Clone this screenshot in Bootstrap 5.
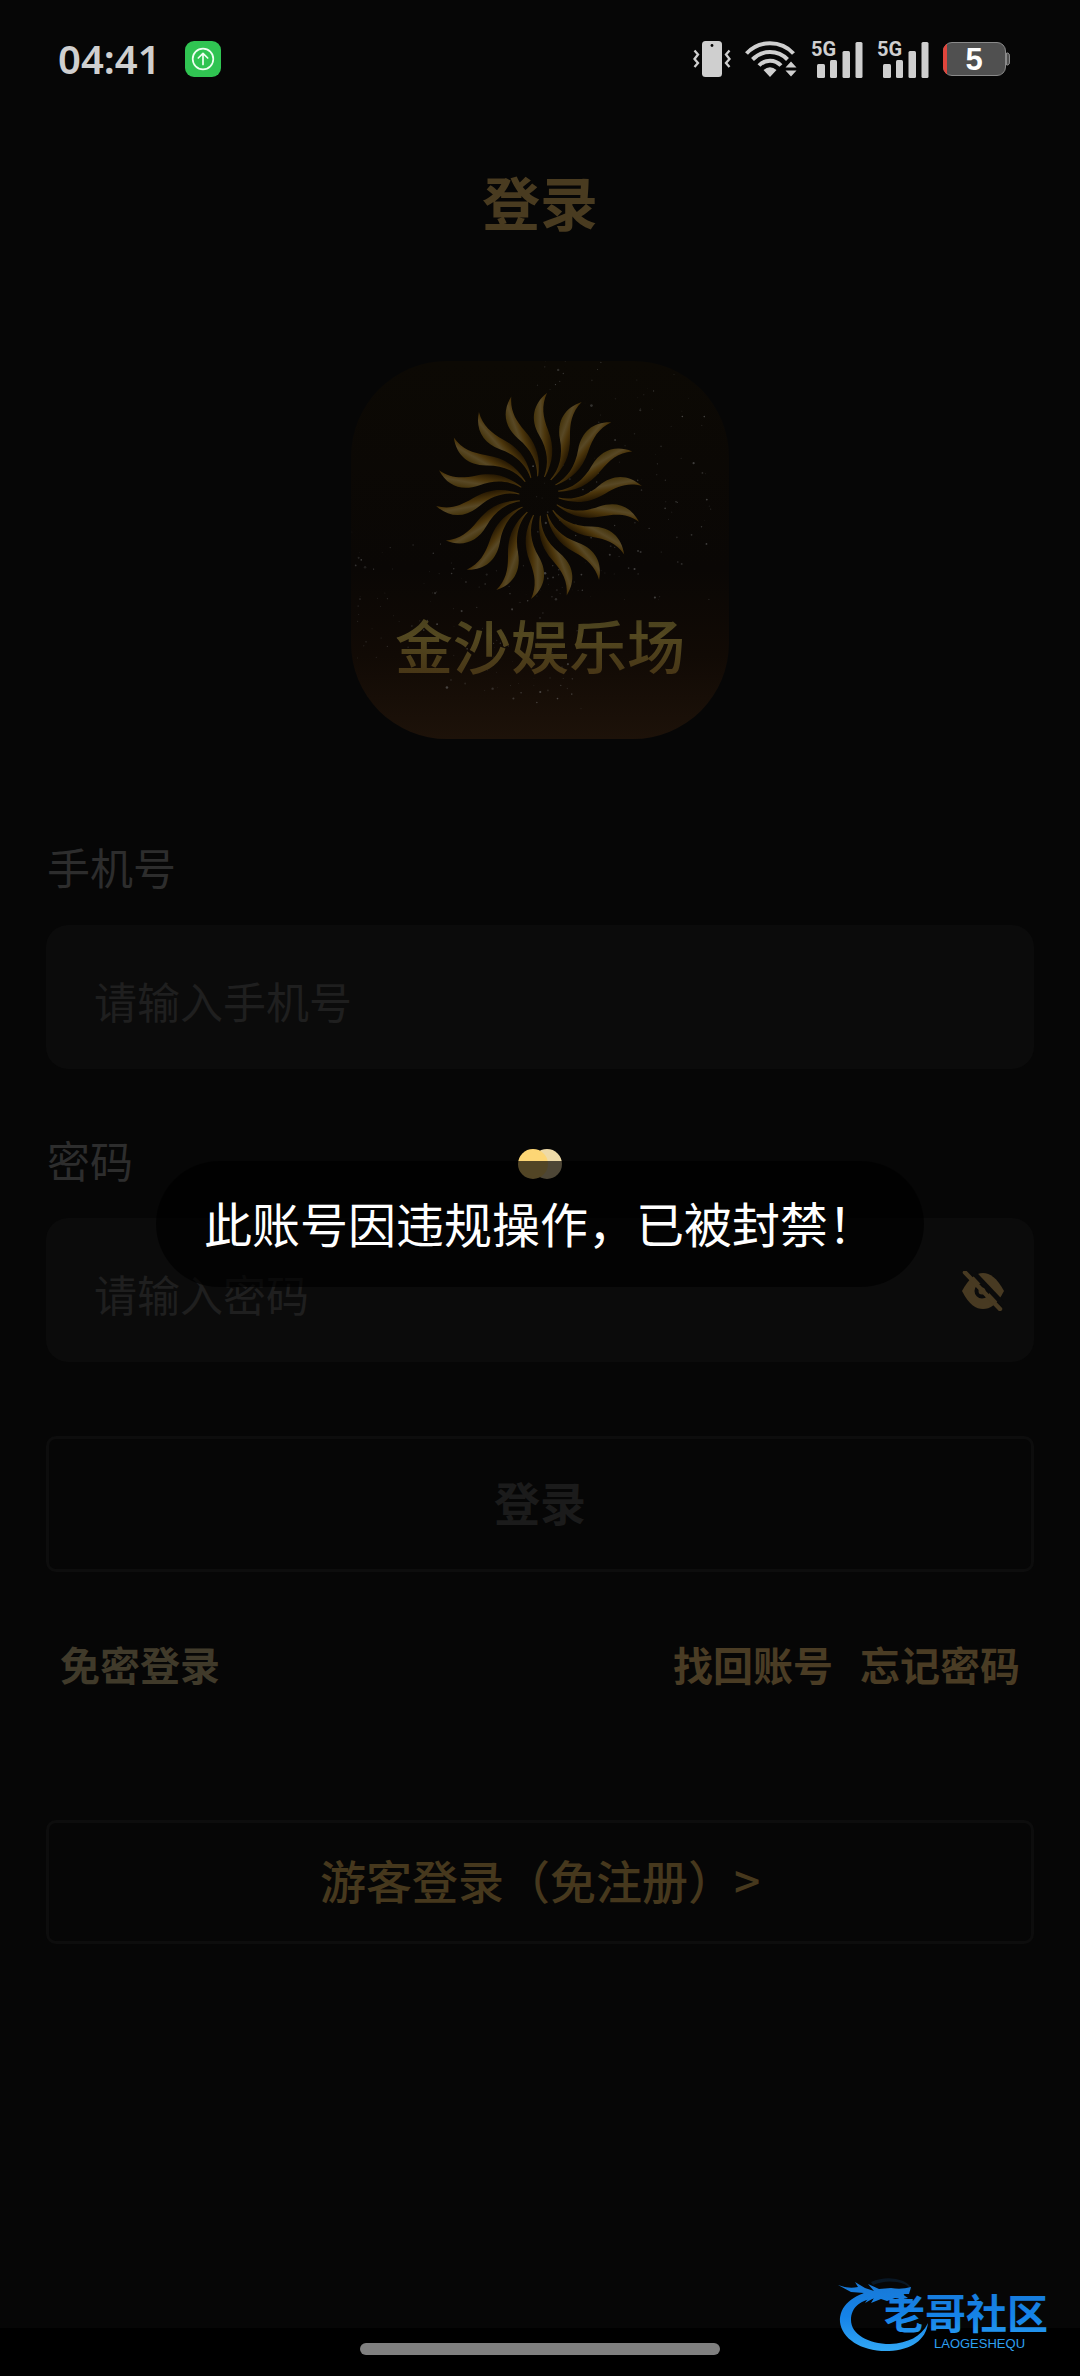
<!DOCTYPE html>
<html lang="zh-CN" data-bs-theme="dark">
<head>
<meta charset="utf-8">
<meta name="viewport" content="width=device-width, initial-scale=1">
<title>登录</title>
<link href="https://cdn.jsdelivr.net/npm/bootstrap@5.3.0/dist/css/bootstrap.min.css" rel="stylesheet">
<style>
  body { background: #000; font-family: "Noto Sans CJK SC", sans-serif; }
  svg { display: block; flex: none; }
  .screen { background: #060606; }
  .status-bar { height: 120px; padding: 0 70px 2px 58px; color: #cfcfcf; }
  .clock { font: 600 40px/48px "Noto Sans", sans-serif; margin-right: 24px; }
  .status-icons { gap: 14px; }
  .page-head { height: 168px; padding-bottom: 6px; }
  .page-title { font-size: 58px; line-height: 72px; color: #493b20; }
  .brand { margin-top: 73px; margin-bottom: 99px; }
  .login-form { padding: 0 46px; }
  .field-label { font-size: 43px; line-height: 56px; color: #2d2d2d; margin-bottom: 31px; padding-left: 1px; }
  .field-box, .field-box:focus { height: 144px; border: 0; border-radius: 22px; background: #0b0b0b; font-size: 43px; line-height: 60px; padding: 5px 100px 0 48px; color: #ccc; }
  .field-box::placeholder { color: #1f1f1f; opacity: 1; }
  .field-gap { margin-bottom: 62px; }
  .eye-btn { top: 0; right: 24px; height: 144px; padding: 2px 6px 0; border: 0; background: none; }
  .line-btn, .line-btn:disabled { border: 3px solid #0d0d0d; border-radius: 10px; font-size: 46px; line-height: 60px; padding: 0 0 6px; opacity: 1; }
  .submit-btn, .submit-btn:disabled { height: 136px; margin-top: 74px; color: #1b1b1b; font-weight: 700; }
  .guest-btn { height: 124px; margin-top: 126px; color: #46381d; font-weight: 500; }
  .links { margin-top: 62px; padding: 0 14px; font-size: 40px; line-height: 60px; font-weight: 700; }
  .links a { color: #4a3c24; text-decoration: none; }
  .links .pale-link { color: #403a2a; }
  .links-right { gap: 27px; }
  .notice { top: calc(50% + 60px); border-radius: 63px; padding: 30px 48px 34px; background: rgba(0,0,0,.68); color: #fff; font-size: 48px; line-height: 62px; white-space: nowrap; }
  .nav-strip { height: 48px; background: #000; padding-top: 15px; }
  .nav-pill { width: 33.3333%; height: 12px; border-radius: 6px; background: #808080; }
  .watermark { right: 12px; bottom: 20px; }
</style>
<script src="https://cdn.jsdelivr.net/npm/bootstrap@5.3.0/dist/js/bootstrap.bundle.min.js"></script>
</head>
<body>
<div class="d-flex flex-column min-vh-100 position-relative">
  <main class="screen flex-grow-1 position-relative">
    <div class="status-bar d-flex align-items-center">
      <span class="clock">04:41</span>
      <svg width="36" height="36" viewBox="0 0 36 36"><rect width="36" height="36" rx="9" fill="#30c452"/><g fill="none" stroke="#effff2" stroke-width="1.7" stroke-linecap="round" stroke-linejoin="round"><circle cx="18" cy="18" r="10.3"/><path d="M18 23.500V12.500M13.300 17 18 12.300 22.700 17"/></g></svg>
      <div class="status-icons d-flex align-items-center ms-auto">
        <svg width="38" height="36" viewBox="0 0 38 36" fill="#cfcfcf"><rect x="9" width="20" height="36" rx="3.500"/><circle cx="19" cy="4.500" r="1.400" fill="#060606"/><path d="M1.500 9.500 5 13.500 1.500 18 5 22 1.500 26M36.500 9.500 33 13.500 36.500 18 33 22 36.500 26" fill="none" stroke="#cfcfcf" stroke-width="2.300"/></svg>
        <svg width="52" height="36" viewBox="0 0 52 36"><g fill="none" stroke="#cfcfcf" stroke-width="4"><path d="M1.500 12.500C14-1.200 36-1.200 48.500 12.500"/><path d="M7.500 18.500C17 8.500 33 8.500 42.500 18.500"/><path d="M14 24.500C20 18 30 18 36 24.500"/></g><g fill="#cfcfcf"><path d="M18.500 29Q25 23.500 31.500 29L25 36ZM40.500 26.500 46 20.500 51.500 26.500ZM40.500 29.500H51.500L46 35.500Z"/></g></svg>
        <svg width="52" height="46" viewBox="0 -4 52 46" fill="#cfcfcf"><text x="0" y="16" font-family="Roboto, sans-serif" font-weight="700" font-size="20">5G</text><rect x="6" y="24" width="8" height="14" rx="1.500"/><rect x="19" y="20" width="7" height="18" rx="1.500"/><rect x="31.500" y="11" width="7.500" height="27" rx="1.500"/><rect x="44.500" y="2" width="7" height="36" rx="1.500"/></svg>
        <svg width="52" height="46" viewBox="0 -4 52 46" fill="#cfcfcf"><text x="0" y="16" font-family="Roboto, sans-serif" font-weight="700" font-size="20">5G</text><rect x="6" y="24" width="8" height="14" rx="1.500"/><rect x="19" y="20" width="7" height="18" rx="1.500"/><rect x="31.500" y="11" width="7.500" height="27" rx="1.500"/><rect x="44.500" y="2" width="7" height="36" rx="1.500"/></svg>
        <svg width="67" height="34" viewBox="0 0 67 34"><clipPath id="cell"><rect width="63" height="34" rx="9"/></clipPath><rect x=".5" y=".5" width="62" height="33" rx="8.500" fill="#505050" stroke="#8a8a8a"/><path d="M63.500 11h1.500q1.500.5 1.500 3v6q0 2.500-1.500 3h-1.500z" fill="#505050" stroke="#8a8a8a"/><rect width="4" height="34" fill="#e0453c" clip-path="url(#cell)"/><text x="31" y="28" text-anchor="middle" fill="#fff" font-family="Liberation Sans, sans-serif" font-weight="700" font-size="31">5</text></svg>
      </div>
    </div>

    <header class="page-head d-flex align-items-center justify-content-center">
      <h1 class="page-title fw-bold m-0">登录</h1>
    </header>

    <div class="brand d-flex justify-content-center">
      <svg width="378" height="378" viewBox="0 0 378 378" role="img" aria-label="金沙娱乐场">
        <defs>
          <linearGradient id="sky" x1="0" y1="0" x2="0" y2="1"><stop offset="0" stop-color="#0c0904"/><stop offset=".55" stop-color="#0a0705"/><stop offset=".78" stop-color="#110a05"/><stop offset="1" stop-color="#1d1209"/></linearGradient>
          <linearGradient id="ray" x1="0" y1="0" x2="1" y2="0"><stop offset="0" stop-color="#45340c"/><stop offset=".35" stop-color="#584825"/><stop offset=".6" stop-color="#4b350b"/><stop offset="1" stop-color="#261802"/></linearGradient>
          <linearGradient id="gold" x1="0" y1="0" x2="0" y2="1"><stop offset="0" stop-color="#40391b"/><stop offset=".4" stop-color="#534820"/><stop offset="1" stop-color="#443013"/></linearGradient>
          <clipPath id="tile"><rect width="378" height="378" rx="96"/></clipPath>
          <path id="flame" d="M5-19C10-32 9-46 0-61C-9-77-6-92 8-103C2-90 4-79 9-66C16-48 14-34 6-19Z"/>
        </defs>
        <g clip-path="url(#tile)">
          <rect width="378" height="378" fill="url(#sky)"/>
          <g id="stars" fill="#777"></g>
          <g id="sun" transform="translate(188 135)" fill="url(#ray)"></g>
          <text x="189" y="308" text-anchor="middle" font-size="58" font-weight="500" fill="url(#gold)">金沙娱乐场</text>
        </g>
      </svg>
    </div>

    <form class="login-form" onsubmit="return false">
      <label class="field-label d-block" for="phone">手机号</label>
      <input class="form-control field-box field-gap" id="phone" type="tel" placeholder="请输入手机号">

      <label class="field-label d-block" for="pass">密码</label>
      <div class="position-relative">
        <input class="form-control field-box" id="pass" type="password" placeholder="请输入密码">
        <button class="eye-btn position-absolute d-flex align-items-center" type="button" aria-label="显示密码">
          <svg width="42" height="40" viewBox="0 0 42 40"><path d="M0 20C7 7 14 2 21 2S35 7 42 20C35 34 28 38 21 38S7 34 0 20Z" fill="#483a22"/><circle cx="20" cy="20" r="5.500" fill="none" stroke="#0b0b0b" stroke-width="4"/><path d="M8-2 42 34" stroke="#0b0b0b" stroke-width="5"/><path d="M3 1.500 38 38" stroke="#483a22" stroke-width="4.500" stroke-linecap="round"/></svg>
        </button>
      </div>

      <button class="btn w-100 line-btn submit-btn" type="submit" disabled>登录</button>

      <div class="links d-flex justify-content-between">
        <a class="pale-link" href="#">免密登录</a>
        <div class="links-right d-flex"><a href="#">找回账号</a><a href="#">忘记密码</a></div>
      </div>

      <button class="btn w-100 line-btn guest-btn" type="button">游客登录（免注册）&gt;</button>
    </form>

    <svg class="position-absolute top-50 start-50 translate-middle" width="44" height="30" viewBox="0 0 44 30" role="img" aria-label="加载中"><circle cx="29" cy="15" r="15" fill="#eedaa7"/><circle cx="15" cy="15" r="15" fill="#fdd675"/></svg>
    <div class="notice position-absolute start-50 translate-middle" role="alert">此账号因违规操作，已被封禁！</div>
  </main>

  <div class="nav-strip"><div class="nav-pill mx-auto"></div></div>

  <svg class="watermark position-absolute" width="230" height="84" viewBox="0 -4 230 84" role="img" aria-label="老哥社区">
    <defs><linearGradient id="blue" gradientUnits="userSpaceOnUse" x1="0" y1="5" x2="0" y2="76"><stop offset="0" stop-color="#1878d6"/><stop offset=".5" stop-color="#1583e8"/><stop offset="1" stop-color="#33a9f5"/></linearGradient></defs>
    <g fill="url(#blue)">
      <path d="M36 15C15 18 1 30 2 46C4 63 24 76 51 75C73 74 88 64 90 47C83 61 70 67 52 68C30 68 13 58 13 44C13 31 23 23 40 22Z"/>
      <path d="M0 9Q10 13 20 11L17 6 27 12 36 15 30 8 41 13 53 12Q63 14 73 11L71 18 64 18 70 22 64 23 57 22 49 25 43 23 33 27 36 22 27 27 31 21 20 22 26 17 13 16Z"/>
      <path d="M33 6Q50-1 65 5Q75 10 73 15Q71 8 59 6Q46 4 35 9Z" opacity=".15"/>
      <text x="46" y="53" font-size="41" font-weight="700">老哥社区</text>
      <text x="96" y="72" font-family="Liberation Sans, sans-serif" font-size="13">LAOGESHEQU</text>
    </g>
  </svg>
</div>
<script>
  const NS = "http://www.w3.org/2000/svg";
  const add = (parent, tag, attrs) => {
    const node = document.createElementNS(NS, tag);
    for (const key in attrs) node.setAttribute(key, attrs[key]);
    document.getElementById(parent).appendChild(node);
  };
  // Eighteen flames, twenty degrees apart
  for (let i = 0; i < 18; i++) add("sun", "use", { href: "#flame", transform: `rotate(${i * 20})` });
  // Star dust: one cloud at the upper right, one at the lower left
  let seed = 7;
  const rnd = () => (seed = (seed * 16807) % 2147483647) / 2147483647;
  for (let i = 0; i < 280; i++) {
    const right = i % 2;
    const x = right ? 360 - rnd() * 180 : rnd() * 230;
    const y = right ? rnd() * 240 : 170 + rnd() * 150 + x / 8;
    add("stars", "circle", { cx: x, cy: y, r: 0.4 + rnd() * rnd() * 1.1, opacity: 0.15 + rnd() * 0.4 });
  }
</script>
</body>
</html>
